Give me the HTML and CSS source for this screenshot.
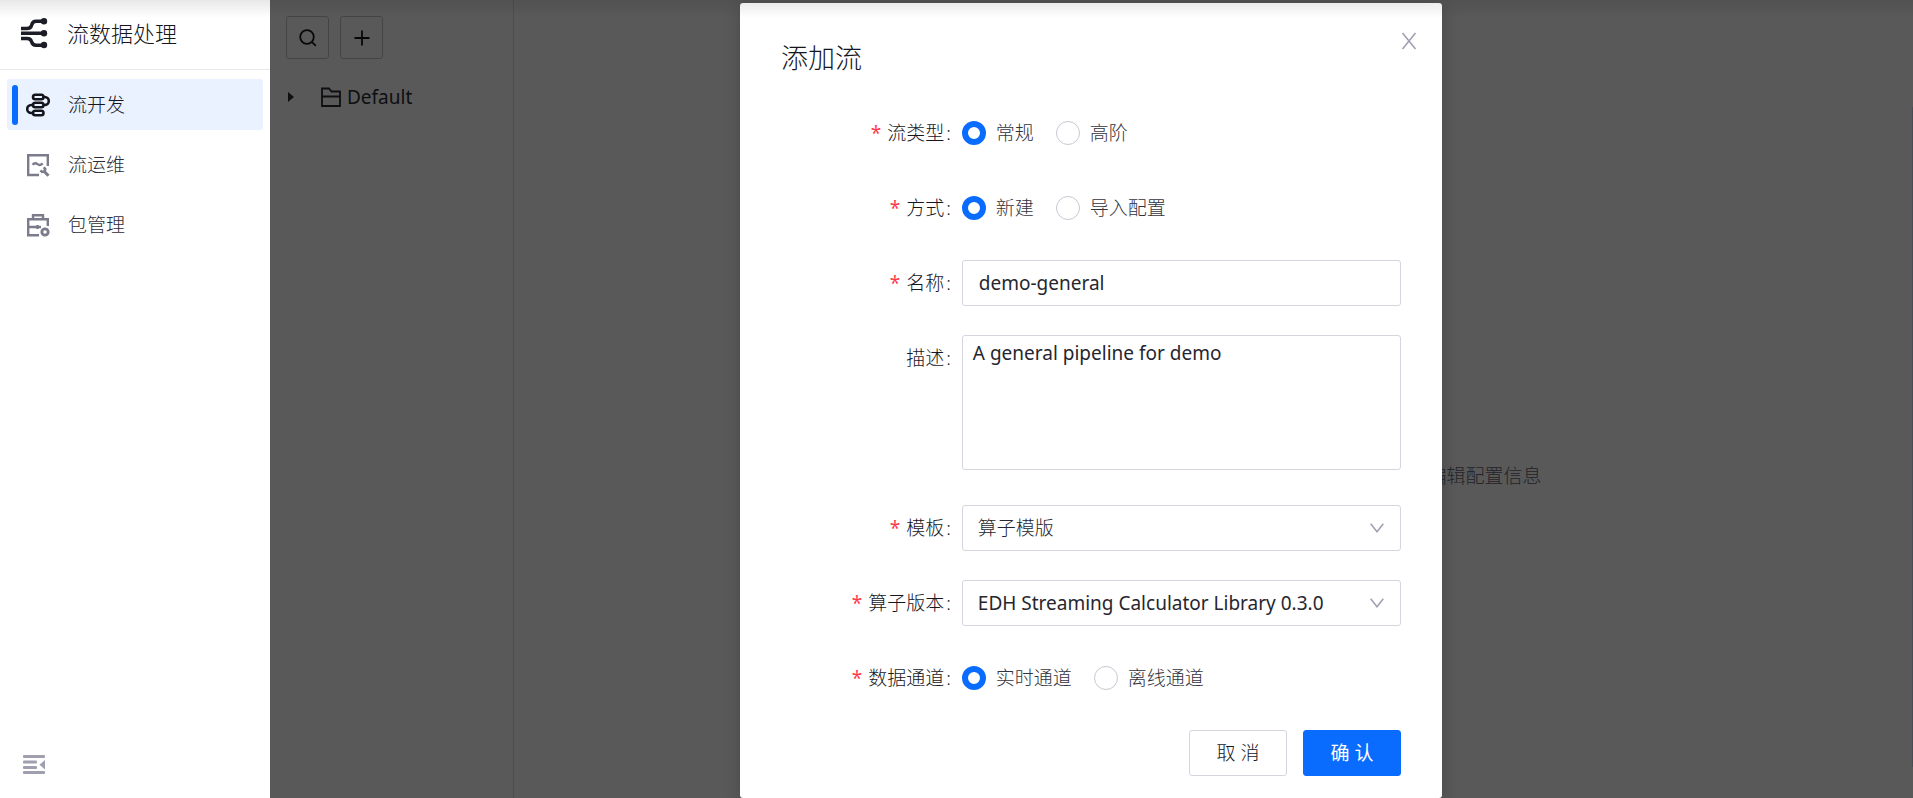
FILE: index.html
```html
<!DOCTYPE html>
<html lang="zh-CN">
<head>
<meta charset="utf-8">
<title>流数据处理</title>
<link rel="stylesheet" href="styles.css">
</head>
<body>
<div class="app">
  <aside class="sidebar">
    <header class="brand">
      <svg class="brand-icon" viewBox="0 0 28 32" fill="none" stroke="currentColor" stroke-width="3.4" stroke-linejoin="round">
        <path d="M1 11.5h6c2.500 0 4-1 4.500-3 .6-2.600 2-4.200 4.500-4.200h8M1 16.200h23M1 21.500h6c2.500 0 4 1 4.500 3 .6 2.600 2 3.700 4.500 3.700h8"/>
        <g fill="currentColor" stroke="none"><circle cx="24" cy="4.300" r="3.200"/><circle cx="24" cy="16.200" r="3.200"/><circle cx="24" cy="28" r="3.200"/></g>
      </svg>
      <h1 class="brand-name">流数据处理</h1>
    </header>
    <nav class="menu">
      <a class="menu-item is-active" href="#dev">
        <svg class="menu-icon" viewBox="0 0 24 24" fill="none" stroke="currentColor" stroke-width="2.600">
          <rect x="7" y="1.800" width="10.500" height="4.400" rx="2.200"/>
          <rect x="7" y="9.800" width="10.500" height="4.400" rx="2.200"/>
          <rect x="7" y="17.800" width="10.500" height="4.400" rx="2.200"/>
          <path d="M17.500 4h1.300a4 4 0 0 1 0 8h-1.300M7 12H5.200a4 4 0 0 0 0 8H7"/>
        </svg>
        <span>流开发</span>
      </a>
      <a class="menu-item" href="#ops">
        <svg class="menu-icon" viewBox="0 0 24 24" fill="none" stroke="currentColor" stroke-width="2.400">
          <path d="M13 22H2.200V2.200h19.600V13"/>
          <path d="M6.500 11.800c1.700-2 3.300-2 5-.7s3.200 1.200 5.200-.8"/>
          <path d="M22.500 22.800l-4-4" stroke-width="3"/>
          <path d="M17.800 14.300l1.400 1.800-.6 2.500-2.500.3-1.600-1.500" stroke-width="2.600"/>
        </svg>
        <span>流运维</span>
      </a>
      <a class="menu-item" href="#packages">
        <svg class="menu-icon" viewBox="0 0 24 24" fill="none" stroke="currentColor" stroke-width="2.400">
          <path d="M13 22.300H2.200V6.200h19.600V13M7 6V2.200h10V6M2 14h13M11.500 12v4"/>
          <circle cx="19" cy="19" r="3.200" stroke-width="2.800"/>
        </svg>
        <span>包管理</span>
      </a>
    </nav>
    <button class="collapse" type="button" aria-label="收起">
      <svg class="collapse-icon" viewBox="0 0 24 22" fill="currentColor">
        <rect x="1" y="1" width="22" height="3" rx="1"/><rect x="1" y="6.500" width="14" height="3" rx="1"/><rect x="1" y="12" width="14" height="3" rx="1"/><rect x="1" y="17" width="22" height="3" rx="1"/><path d="M23 6v9.500l-5.500-4.700z"/>
      </svg>
    </button>
  </aside>

  <main class="workspace">
    <section class="tree-panel">
      <div class="tools">
        <button class="tool" type="button" aria-label="搜索">
          <svg class="tool-icon" viewBox="0 0 20 20" fill="none" stroke="currentColor" stroke-width="1.800"><circle cx="9" cy="9" r="6.800"/><path d="M13.800 13.800l4 4"/></svg>
        </button>
        <button class="tool" type="button" aria-label="添加">
          <svg class="tool-icon" viewBox="0 0 20 20" fill="none" stroke="currentColor" stroke-width="1.800"><path d="M10 2.500v15M2.500 10h15"/></svg>
        </button>
      </div>
      <div class="tree-node">
        <svg class="caret" viewBox="0 0 6 10" fill="currentColor"><path d="M0 0l6 5-6 5z"/></svg>
        <svg class="folder" viewBox="0 0 20 20" fill="none" stroke="currentColor" stroke-width="1.800"><path d="M1 19V1.500h7l2.500 3H19V19zM1 9.500h18"/></svg>
        <span>Default</span>
      </div>
    </section>
    <section class="canvas"><p class="hint">编辑配置信息</p></section>
    <div class="scroll-edge"></div>

    <div class="mask">
      <form class="dialog" role="dialog" aria-labelledby="dialog-title">
        <button class="close" type="button" aria-label="关闭">
          <svg class="close-icon" viewBox="0 0 16 18" fill="none" stroke="currentColor" stroke-width="1.600"><path d="M1.500 1l13 16M14.500 1l-13 16"/></svg>
        </button>
        <h2 class="dialog-title" id="dialog-title">添加流</h2>

        <div class="row" role="radiogroup" aria-labelledby="l-type">
          <span class="label required" id="l-type">流类型</span>
          <div class="options">
            <label class="option"><input class="radio" type="radio" name="type" checked>常规</label>
            <label class="option"><input class="radio" type="radio" name="type">高阶</label>
          </div>
        </div>
        <div class="row" role="radiogroup" aria-labelledby="l-mode">
          <span class="label required" id="l-mode">方式</span>
          <div class="options">
            <label class="option"><input class="radio" type="radio" name="mode" checked>新建</label>
            <label class="option"><input class="radio" type="radio" name="mode">导入配置</label>
          </div>
        </div>
        <div class="row">
          <label class="label required" for="name">名称</label>
          <input class="field" id="name" type="text" value="demo-general">
        </div>
        <div class="row row-area">
          <label class="label" for="desc">描述</label>
          <textarea class="field area" id="desc">A general pipeline for demo</textarea>
        </div>
        <div class="row">
          <label class="label required" for="tpl">模板</label>
          <div class="select-box">
            <select class="field select select-cjk" id="tpl"><option>算子模版</option></select>
            <svg class="arrow" viewBox="0 0 14 10" fill="none" stroke="currentColor" stroke-width="1.500"><path d="M.7.7L7 8.800 13.300.7"/></svg>
          </div>
        </div>
        <div class="row">
          <label class="label required" for="ver">算子版本</label>
          <div class="select-box">
            <select class="field select" id="ver"><option>EDH Streaming Calculator Library 0.3.0</option></select>
            <svg class="arrow" viewBox="0 0 14 10" fill="none" stroke="currentColor" stroke-width="1.500"><path d="M.7.7L7 8.800 13.300.7"/></svg>
          </div>
        </div>
        <div class="row" role="radiogroup" aria-labelledby="l-channel">
          <span class="label required" id="l-channel">数据通道</span>
          <div class="options">
            <label class="option"><input class="radio" type="radio" name="channel" checked>实时通道</label>
            <label class="option"><input class="radio" type="radio" name="channel">离线通道</label>
          </div>
        </div>
        <div class="actions">
          <button class="btn" type="button">取 消</button>
          <button class="btn btn-primary" type="submit">确 认</button>
        </div>
      </form>
    </div>
  </main>
  <div class="top-shade"></div>
</div>
</body>
</html>
```
FILE: styles.css
```css
* { box-sizing: border-box; }

body {
  margin: 0;
  font-family: "Noto Sans", "Noto Sans CJK SC", sans-serif;
  font-size: 19px;
  font-weight: 300;
  line-height: 28px;
  color: #16161e;
}

button, input, select, textarea { font: inherit; color: inherit; margin: 0; }
h1, h2, p { margin: 0; font-weight: inherit; }
svg { display: block; flex: none; }

.app { position: relative; display: flex; height: 100vh; overflow: hidden; background: #fff; }

.top-shade {
  position: absolute;
  inset: 0 0 auto 0;
  height: 18px;
  background: linear-gradient(rgba(0, 0, 0, .09), rgba(0, 0, 0, 0));
  pointer-events: none;
}

/* Sidebar */
.sidebar { flex: none; width: 270px; display: flex; flex-direction: column; }
.brand {
  display: flex;
  align-items: center;
  gap: 19px;
  height: 70px;
  padding: 0 20px 4px;
  border-bottom: 1px solid #e9e9ec;
}
.brand-icon { width: 28px; height: 32px; color: #1d1d28; }
.brand-name { font-size: 22px; }
.menu { display: flex; flex-direction: column; gap: 9px; padding: 9px 7px; }
.menu-item {
  position: relative;
  display: flex;
  align-items: center;
  gap: 18px;
  height: 51px;
  padding-left: 19px;
  border-radius: 3px;
  color: #2c2c36;
  text-decoration: none;
}
.menu-icon { width: 24px; height: 24px; color: #7b7b8c; }
.is-active { background: #eaf2ff; color: #16161e; }
.is-active .menu-icon { color: #15151c; }
.is-active::before {
  content: "";
  position: absolute;
  left: 5px;
  top: 6px;
  bottom: 5px;
  width: 6px;
  border-radius: 3px;
  background: #0a6cff;
}
.collapse { margin: auto auto 22px 22px; padding: 0; border: 0; background: none; color: #9f9fb0; }
.collapse-icon { width: 24px; height: 22px; }

/* Workspace */
.workspace { position: relative; flex: 1; min-width: 0; display: flex; }
.tree-panel { flex: none; width: 244px; padding: 16px; border-right: 1px solid #dcdce2; }
.tools { display: flex; gap: 11px; }
.tool {
  display: grid;
  place-items: center;
  width: 43px;
  height: 43px;
  padding: 0;
  border: 1px solid #c4c4cc;
  border-radius: 3px;
  background: none;
}
.tool-icon { width: 20px; height: 20px; }
.tree-node { display: flex; align-items: center; margin-top: 24px; padding-left: 2px; color: #2c2c36; font-weight: 400; }
.caret { width: 6px; height: 10px; margin-right: 27px; }
.folder { width: 20px; height: 20px; margin-right: 6px; }
.canvas { flex: 1; display: flex; align-items: center; justify-content: center; padding: 200px 0 46px 33%; }
.hint { color: #666672; white-space: nowrap; }
.scroll-edge { position: absolute; right: 0; top: 107px; bottom: 31px; width: 1px; background: #cde; }

/* Dialog */
.mask {
  position: absolute;
  inset: 0;
  padding: 3px 17px 0 16px;
  overflow: hidden;
  background: rgba(0, 0, 0, .65);
}
.dialog {
  position: relative;
  display: flex;
  flex-direction: column;
  gap: 29px;
  width: 702px;
  max-width: 100%;
  min-height: 100%;
  margin: 0 auto;
  padding: 35px 41px 20px;
  border-radius: 3px;
  background: #fff;
  box-shadow: 0 4px 16px rgba(0, 0, 0, .2);
}
.dialog-title { font-size: 27px; line-height: 40px; margin-bottom: 3px; }
.close { position: absolute; right: 25px; top: 29px; padding: 0; border: 0; background: none; color: #a0a0b2; }
.close-icon { width: 16px; height: 18px; }

.row { display: grid; grid-template-columns: 7fr 17fr; align-items: center; min-height: 46px; }
.row-area { align-items: start; padding-bottom: 6px; }
.label { padding-right: 11px; line-height: 46px; text-align: right; }
.label::after { content: ":"; margin-left: 2px; }
.required::before { content: "*"; margin-right: 6px; color: #ff3b4b; font-weight: 400; }

.options { display: flex; gap: 22px; }
.option { display: flex; align-items: center; gap: 10px; color: #33333d; }
.radio {
  appearance: none;
  width: 24px;
  height: 24px;
  border: 1px solid #c8c8d4;
  border-radius: 50%;
  background: #fff;
}
.radio:checked { border: 6px solid #0a6cff; }

.field {
  display: block;
  width: 100%;
  height: 46px;
  padding: 0 16px;
  border: 1px solid #d5d5df;
  border-radius: 3px;
  background: #fff;
  color: #26262f;
  font-weight: 400;
  outline: 0;
}
.area { height: 135px; padding: 3px 10px; resize: none; }
.select-box { position: relative; }
.select { appearance: none; padding: 0 15px; }
.select-cjk { font-weight: 300; }
.arrow { position: absolute; right: 17px; top: 18px; width: 14px; height: 10px; color: #a0a0b2; pointer-events: none; }

.actions { display: flex; justify-content: flex-end; gap: 16px; }
.btn {
  width: 98px;
  height: 46px;
  padding: 0;
  border: 1px solid #d5d5df;
  border-radius: 3px;
  background: #fff;
}
.btn-primary { border-color: #0a6cff; background: #0a6cff; color: #fff; font-weight: 400; }
```
